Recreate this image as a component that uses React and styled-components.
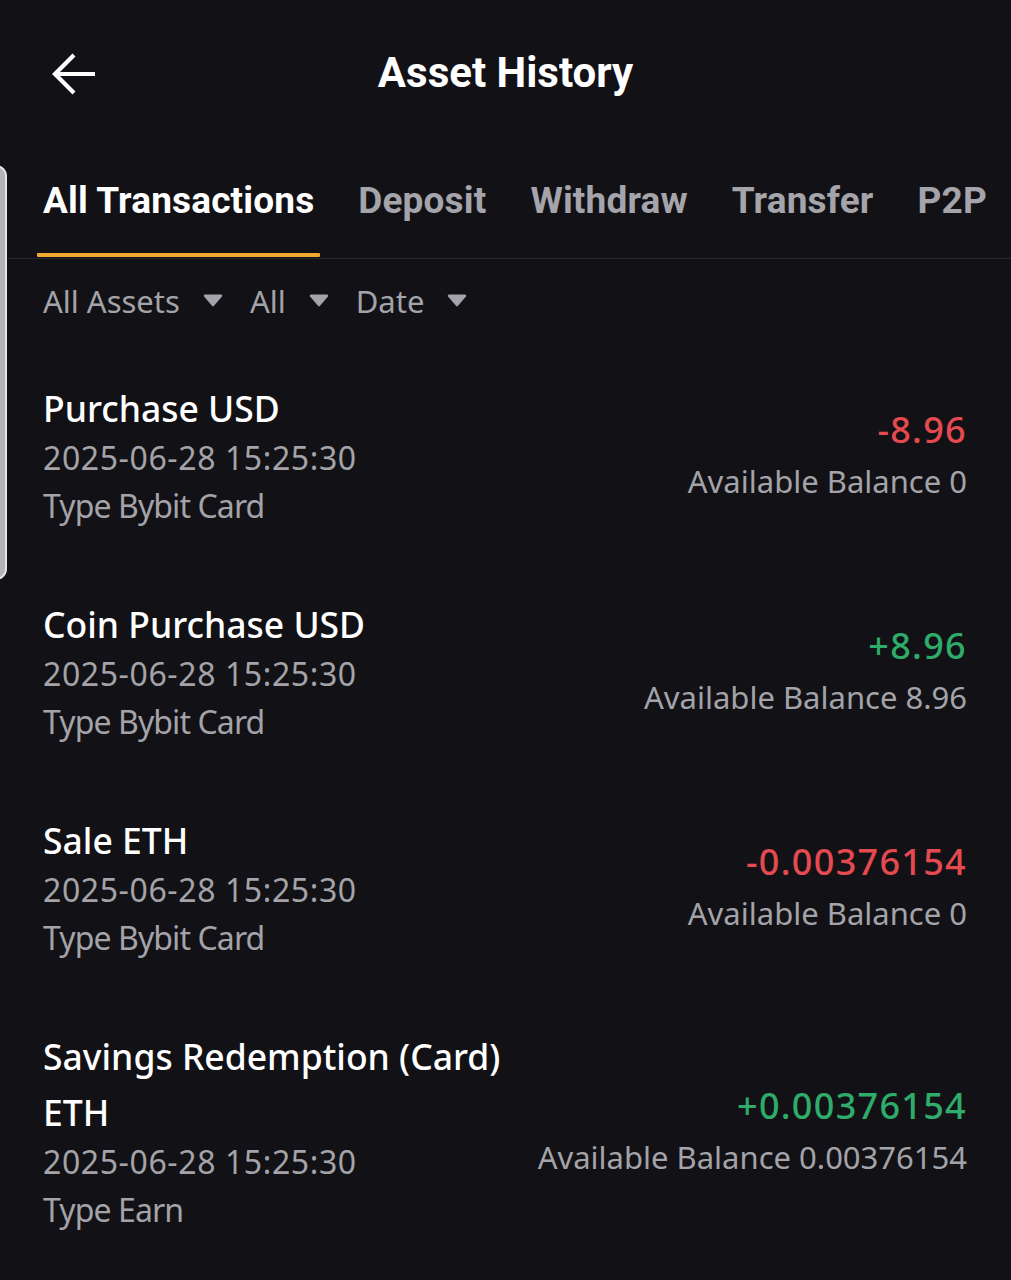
import React from "react";
import styled, { createGlobalStyle } from "styled-components";

const GlobalStyle = createGlobalStyle`
  html, body {
    margin: 0;
    padding: 0;
    background: #121216;
  }
  body {
    font-family: "Noto Sans", Roboto, sans-serif;
    color: #ffffff;
    -webkit-font-smoothing: antialiased;
  }
`;

const Screen = styled.div`
  position: relative;
  width: 1011px;
  min-height: 1280px;
  background: #121216;
  overflow: hidden;
`;

const Header = styled.header`
  position: relative;
  display: flex;
  align-items: center;
  justify-content: center;
  height: 146px;
`;

const BackButton = styled.button`
  position: absolute;
  left: 48px;
  top: 50px;
  width: 52px;
  height: 48px;
  padding: 0;
  border: none;
  background: none;
  display: flex;
  align-items: center;
  justify-content: center;
  cursor: pointer;
`;

const Title = styled.h1`
  margin: 0;
  font-family: Roboto, "Noto Sans", sans-serif;
  font-weight: 700;
  font-size: 42px;
  line-height: 1;
  color: #ffffff;
`;

const TabBar = styled.nav`
  display: flex;
  gap: 44px;
  padding-left: 43px;
  border-bottom: 1px solid #26262b;
  white-space: nowrap;
`;

const Tab = styled.div`
  position: relative;
  height: 112px;
  line-height: 110px;
  font-family: Roboto, "Noto Sans", sans-serif;
  font-weight: 700;
  font-size: 37px;
  letter-spacing: 0.15px;
  color: ${({ $active }) => ($active ? "#ffffff" : "#a4a4aa")};

  &::after {
    content: "";
    display: ${({ $active }) => ($active ? "block" : "none")};
    position: absolute;
    left: -6px;
    right: -6px;
    bottom: 1px;
    height: 4px;
    border-radius: 1px;
    background: #f0a92e;
  }
`;

const Filters = styled.div`
  display: flex;
  align-items: center;
  height: 84px;
  padding-left: 43px;
`;

const Filter = styled.div`
  display: flex;
  align-items: center;
  gap: 23px;
  margin-right: 27px;
  font-size: 31px;
  color: #a3a3a9;
`;

const Caret = styled.svg`
  width: 20px;
  height: 14px;
  margin-top: -2px;
`;

const List = styled.div`
  padding-top: 4px;
`;

const Row = styled.div`
  display: flex;
  align-items: center;
  justify-content: space-between;
  gap: 24px;
  padding: 33px 44px 33px 43px;
`;

const Info = styled.div`
  display: flex;
  flex-direction: column;
  max-width: 475px;
`;

const Name = styled.div`
  font-weight: 500;
  font-size: 35.5px;
  line-height: 56px;
  margin-bottom: -2px;
  color: #ffffff;
`;

const Meta = styled.div`
  font-size: 32px;
  line-height: 48px;
  letter-spacing: ${({ $numeric }) => ($numeric ? "0.6px" : "-0.9px")};
  color: #a3a3a9;
`;

const Figures = styled.div`
  display: flex;
  flex-direction: column;
  align-items: flex-end;
  text-align: right;
  white-space: nowrap;
`;

const Amount = styled.div`
  font-weight: 500;
  font-size: 36px;
  line-height: 52px;
  letter-spacing: 1.3px;
  color: ${({ $positive }) => ($positive ? "#2fab6a" : "#e44a4f")};
`;

const Balance = styled.div`
  font-size: 31px;
  line-height: 50px;
  color: #a3a3a9;
`;

const SideHandle = styled.div`
  position: absolute;
  left: -4px;
  top: 165px;
  width: 9px;
  height: 411px;
  background: #b3b3b7;
  border: 2px solid #e4e4e6;
  border-left: none;
  border-radius: 0 12px 12px 0;
`;

const tabs = ["All Transactions", "Deposit", "Withdraw", "Transfer", "P2P"];
const filters = ["All Assets", "All", "Date"];

const records = [
  {
    name: "Purchase USD",
    date: "2025-06-28 15:25:30",
    type: "Type Bybit Card",
    amount: "-8.96",
    positive: false,
    balance: "Available Balance 0",
  },
  {
    name: "Coin Purchase USD",
    date: "2025-06-28 15:25:30",
    type: "Type Bybit Card",
    amount: "+8.96",
    positive: true,
    balance: "Available Balance 8.96",
  },
  {
    name: "Sale ETH",
    date: "2025-06-28 15:25:30",
    type: "Type Bybit Card",
    amount: "-0.00376154",
    positive: false,
    balance: "Available Balance 0",
  },
  {
    name: "Savings Redemption (Card) ETH",
    date: "2025-06-28 15:25:30",
    type: "Type Earn",
    amount: "+0.00376154",
    positive: true,
    balance: "Available Balance 0.00376154",
  },
];

const BackArrow = () => (
  <svg width="48" height="44" viewBox="0 0 48 44" fill="none">
    <path
      d="M45 22H6M24 3L5 22l19 19"
      stroke="#ffffff"
      strokeWidth="4.2"
      strokeLinecap="butt"
      strokeLinejoin="miter"
    />
  </svg>
);

const DownCaret = () => (
  <Caret viewBox="0 0 20 14">
    <path
      d="M2 1.5h16a1.2 1.2 0 0 1 1 1.9l-8 9.4a1.3 1.3 0 0 1-2 0l-8-9.4a1.2 1.2 0 0 1 1-1.9z"
      fill="#a3a3a9"
    />
  </Caret>
);

export default function App() {
  return (
    <>
      <GlobalStyle />
      <Screen>
        <Header>
          <BackButton aria-label="Back">
            <BackArrow />
          </BackButton>
          <Title>Asset History</Title>
        </Header>

        <TabBar>
          {tabs.map((t, i) => (
            <Tab key={t} $active={i === 0}>
              {t}
            </Tab>
          ))}
        </TabBar>

        <Filters>
          {filters.map((f) => (
            <Filter key={f}>
              {f}
              <DownCaret />
            </Filter>
          ))}
        </Filters>

        <List>
          {records.map((r) => (
            <Row key={r.name}>
              <Info>
                <Name>{r.name}</Name>
                <Meta $numeric>{r.date}</Meta>
                <Meta>{r.type}</Meta>
              </Info>
              <Figures>
                <Amount $positive={r.positive}>{r.amount}</Amount>
                <Balance>{r.balance}</Balance>
              </Figures>
            </Row>
          ))}
        </List>

        <SideHandle />
      </Screen>
    </>
  );
}
